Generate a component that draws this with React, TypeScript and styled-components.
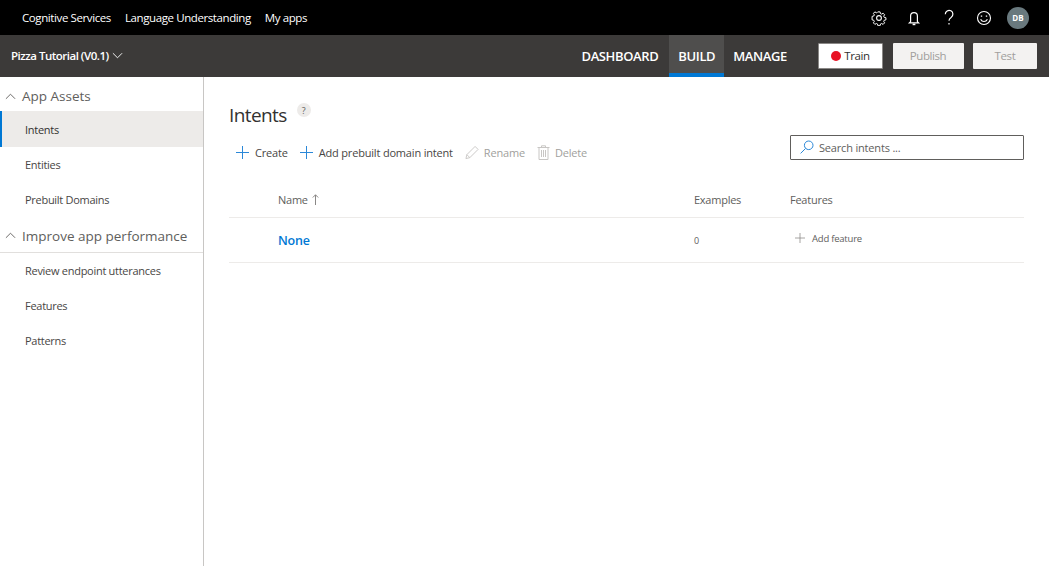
import React from 'react';
import styled, { createGlobalStyle } from 'styled-components';

const GlobalStyle = createGlobalStyle`
  html, body {
    margin: 0;
    padding: 0;
    height: 100%;
    background: #fff;
    font-family: "Open Sans", "Noto Sans", "Liberation Sans", sans-serif;
    overflow: hidden;
  }
`;

const Page = styled.div`
  display: flex;
  flex-direction: column;
  width: 1049px;
  height: 566px;
`;

const TopBar = styled.header`
  display: flex;
  align-items: center;
  justify-content: space-between;
  height: 35px;
  background: #000;
  padding: 0 20px 0 22px;
`;

const TopLinks = styled.nav`
  display: flex;
  gap: 14px;
`;

const TopLink = styled.a`
  color: #fff;
  font-size: 11.5px;
  letter-spacing: -0.4px;
`;

const TopIcons = styled.div`
  display: flex;
  align-items: center;
  gap: 15px;
`;

const TopIcon = styled.span`
  display: flex;
  align-items: center;
  justify-content: center;
  width: 20px;
  height: 20px;
  color: #fff;
  svg {
    display: block;
  }
`;

const Avatar = styled.span`
  display: flex;
  align-items: center;
  justify-content: center;
  width: 22px;
  height: 22px;
  margin-left: -2px;
  border-radius: 50%;
  background: #69797e;
  color: #fff;
  font-size: 8px;
  font-weight: 700;
`;

const AppBar = styled.div`
  display: flex;
  align-items: stretch;
  justify-content: space-between;
  height: 42px;
  background: #3c3a39;
  padding: 0 12px 0 11px;
`;

const AppName = styled.div`
  display: flex;
  align-items: center;
  gap: 3px;
  padding-bottom: 1px;
  color: #fff;
  font-size: 11.5px;
  font-weight: 600;
  letter-spacing: -0.5px;
`;

const AppNav = styled.div`
  display: flex;
  align-items: stretch;
`;

const NavTab = styled.a<{ $active?: boolean; $wide?: boolean }>`
  display: flex;
  align-items: center;
  padding: ${(p) => (p.$active ? '4px 9px 0' : `0 ${p.$wide ? '11px' : '10px'} 0 9px`)};
  color: #fff;
  font-size: 13px;
  font-weight: 600;
  letter-spacing: -0.38px;
  background: ${(p) => (p.$active ? '#4f4e4d' : 'transparent')};
  border-bottom: ${(p) => (p.$active ? '4px solid #0078d4' : 'none')};
`;

const Actions = styled.div`
  display: flex;
  align-items: center;
  gap: 9.5px;
  margin-left: 21px;
`;

const TrainButton = styled.button`
  display: flex;
  align-items: center;
  justify-content: center;
  gap: 3px;
  width: 65px;
  height: 26px;
  padding: 0 0 1px;
  background: #fff;
  border: 1px solid #8a8886;
  border-radius: 1px;
  color: #323130;
  font: inherit;
  font-size: 11.5px;
  letter-spacing: -0.4px;
`;

const RedDot = styled.span`
  width: 10px;
  height: 10px;
  border-radius: 50%;
  background: #e81123;
`;

const DisabledButton = styled.button<{ $width: number }>`
  width: ${(p) => p.$width}px;
  height: 26px;
  padding: 0 0 1px;
  background: #f3f2f1;
  border: none;
  border-radius: 1px;
  color: #a19f9d;
  font: inherit;
  font-size: 11.5px;
  font-weight: 400;
  letter-spacing: -0.4px;
`;

const Body = styled.div`
  display: flex;
  flex: 1;
  min-height: 0;
`;

const Sidebar = styled.aside`
  width: 203px;
  flex-shrink: 0;
  border-right: 1px solid #c8c6c4;
  padding-top: 6px;
`;

const SectionHead = styled.div<{ $ruled?: boolean }>`
  display: flex;
  align-items: center;
  gap: 6px;
  box-sizing: border-box;
  height: ${(p) => (p.$ruled ? '36px' : '26px')};
  margin-bottom: ${(p) => (p.$ruled ? '0' : '2px')};
  padding: ${(p) => (p.$ruled ? '2px 0 0 5px' : '0 0 0 5px')};
  color: #605e5c;
  font-size: 13.5px;
  border-bottom: ${(p) => (p.$ruled ? '1px solid #e1dfdd' : 'none')};
`;

const NavItem = styled.a<{ $active?: boolean }>`
  display: flex;
  align-items: center;
  height: ${(p) => (p.$active ? '36px' : '35px')};
  padding-left: ${(p) => (p.$active ? '23px' : '25px')};
  font-size: 11px;
  letter-spacing: -0.28px;
  color: ${(p) => (p.$active ? '#323130' : '#484644')};
  background: ${(p) => (p.$active ? '#edebe9' : 'transparent')};
  border-left: ${(p) => (p.$active ? '2px solid #0078d4' : 'none')};
`;

const Main = styled.main`
  flex: 1;
  padding: 24px 25px 0;
  min-width: 0;
`;

const TitleRow = styled.div`
  display: flex;
  align-items: flex-start;
  gap: 10px;
  height: 28px;
`;

const Title = styled.h1`
  margin: 0;
  font-size: 19px;
  font-weight: 400;
  line-height: 28px;
  letter-spacing: -0.6px;
  color: #323130;
`;

const HelpBadge = styled.span`
  display: flex;
  align-items: center;
  justify-content: center;
  width: 14px;
  height: 14px;
  margin-top: 2px;
  border-radius: 50%;
  background: #edebe9;
  color: #605e5c;
  font-size: 9px;
`;

const ToolRow = styled.div`
  display: flex;
  align-items: center;
  justify-content: space-between;
  height: 36px;
  margin-top: 5px;
`;

const Tools = styled.div`
  display: flex;
  align-items: center;
  gap: 12px;
  padding-left: 7px;
`;

const Tool = styled.a<{ $disabled?: boolean }>`
  display: flex;
  align-items: center;
  gap: ${(p) => (p.$disabled ? '5px' : '6px')};
  font-size: 11px;
  letter-spacing: -0.18px;
  color: ${(p) => (p.$disabled ? '#a19f9d' : '#484644')};
`;

const SearchBox = styled.div`
  display: flex;
  align-items: center;
  gap: 5px;
  box-sizing: border-box;
  width: 234px;
  height: 25px;
  margin-top: -10px;
  padding-left: 9px;
  border: 1px solid #605e5c;
  border-radius: 1px;
  color: #605e5c;
  font-size: 11px;
  letter-spacing: -0.18px;
`;

const TableRow = styled.div<{ $height: number; $head?: boolean }>`
  display: grid;
  grid-template-columns: 465px 96px 1fr;
  align-items: center;
  box-sizing: border-box;
  height: ${(p) => p.$height}px;
  padding-top: ${(p) => (p.$head ? '12px' : '0')};
  border-bottom: 1px solid #edebe9;
`;

const HeadCell = styled.div<{ $first?: boolean }>`
  display: flex;
  align-items: center;
  gap: 4px;
  padding-left: ${(p) => (p.$first ? '49px' : '0')};
  color: #605e5c;
  font-size: 11px;
  letter-spacing: -0.25px;
`;

const NameLink = styled.a`
  padding-left: 49px;
  color: #0078d4;
  font-size: 12.5px;
  font-weight: 600;
  letter-spacing: -0.2px;
`;

const CountCell = styled.div`
  color: #605e5c;
  font-size: 9px;
`;

const AddFeature = styled.a`
  display: flex;
  align-items: center;
  gap: 7px;
  margin-top: -4px;
  padding-left: 5px;
  color: #605e5c;
  font-size: 9.5px;
  letter-spacing: -0.22px;
`;

const Chevron = ({ up, size = 11 }: { up?: boolean; size?: number }) => (
  <svg width={size} height={size} viewBox="0 0 12 12" fill="none" stroke="currentColor" strokeWidth="1">
    <path d={up ? 'M1 8.5 6 3.5l5 5' : 'M1 3.5l5 5 5-5'} />
  </svg>
);

const Plus = ({ color, size = 13 }: { color: string; size?: number }) => (
  <svg width={size} height={size} viewBox="0 0 13 13" fill="none" stroke={color} strokeWidth="1">
    <path d="M6.5 0v13M0 6.5h13" />
  </svg>
);

const Gear = () => (
  <svg width="16" height="16" viewBox="0 0 16 16" fill="none" stroke="currentColor" strokeWidth="1.1">
    <circle cx="8" cy="8" r="2.4" />
    <path d="M6.8 1.2h2.4l.4 1.9 1.3.6 1.7-1 1.6 1.7-1 1.6.6 1.3 1.9.4v2.4l-1.9.4-.6 1.3 1 1.6-1.6 1.7-1.7-1-1.3.6-.4 1.9H6.8l-.4-1.9-1.3-.6-1.7 1-1.6-1.7 1-1.6-.6-1.3-1.9-.4V6.2l1.9-.4.6-1.3-1-1.6 1.6-1.7 1.7 1 1.3-.6z" transform="translate(.8 .8) scale(.9)" />
  </svg>
);

const Bell = () => (
  <svg width="16" height="16" viewBox="0 0 16 16" fill="none" stroke="currentColor" strokeWidth="1.2">
    <path d="M4.6 11.6V6a3.4 3.4 0 0 1 6.8 0v5.6l1.2 1.2H3.4z" />
    <path d="M6.6 14.4h2.8" strokeWidth="1.6" />
  </svg>
);

const Question = () => (
  <svg width="16" height="18" viewBox="0 0 16 18" fill="none" stroke="currentColor" strokeWidth="1.2">
    <path d="M4.3 5.2a3.8 3.8 0 1 1 5.8 3.2C8.6 9.4 8 10 8 11.8" />
    <path d="M8 14v1.4" />
  </svg>
);

const Smile = () => (
  <svg width="16" height="16" viewBox="0 0 16 16" fill="none" stroke="currentColor" strokeWidth="1.1">
    <circle cx="8" cy="8" r="6.5" />
    <path d="M4.6 9.2c.8 1.6 2 2.3 3.4 2.3s2.6-.7 3.4-2.3" />
    <path d="M5.5 5.4v1.4M10.5 5.4v1.4" strokeWidth="1.4" />
  </svg>
);

const Pencil = () => (
  <svg width="14" height="15" viewBox="0 0 15 15" fill="none" stroke="#c8c6c4" strokeWidth="1">
    <path d="M1 14l1-4.2L10.8 1l3.2 3.2L5.2 13z" />
    <path d="M2 9.8 5.2 13" />
  </svg>
);

const Trash = () => (
  <svg width="13" height="15" viewBox="0 0 13 15" fill="none" stroke="#c8c6c4" strokeWidth="1">
    <path d="M.5 2.5h12M4.5 2.5V.8h4v1.7M2 2.5v12h9v-12" />
    <path d="M4.5 5v7M6.5 5v7M8.5 5v7" />
  </svg>
);

const SearchGlyph = () => (
  <svg width="14" height="14" viewBox="0 0 14 14" fill="none" stroke="#2b88d8" strokeWidth="1">
    <circle cx="8.7" cy="5.3" r="4.3" />
    <path d="M5.6 8.4.6 13.4" />
  </svg>
);

const SortUp = () => (
  <svg width="7" height="11" viewBox="0 0 7 11" fill="none" stroke="#8a8886" strokeWidth="1">
    <path d="M3.5 11V.8M.8 3.5 3.5.8l2.7 2.7" />
  </svg>
);

const assetItems = ['Intents', 'Entities', 'Prebuilt Domains'];
const improveItems = ['Review endpoint utterances', 'Features', 'Patterns'];

export default function App() {
  return (
    <Page>
      <GlobalStyle />
      <TopBar>
        <TopLinks>
          <TopLink>Cognitive Services</TopLink>
          <TopLink>Language Understanding</TopLink>
          <TopLink>My apps</TopLink>
        </TopLinks>
        <TopIcons>
          <TopIcon><Gear /></TopIcon>
          <TopIcon><Bell /></TopIcon>
          <TopIcon><Question /></TopIcon>
          <TopIcon><Smile /></TopIcon>
          <Avatar>DB</Avatar>
        </TopIcons>
      </TopBar>
      <AppBar>
        <AppName>
          Pizza Tutorial (V0.1) <Chevron />
        </AppName>
        <AppNav>
          <NavTab $wide>DASHBOARD</NavTab>
          <NavTab $active>BUILD</NavTab>
          <NavTab>MANAGE</NavTab>
          <Actions>
            <TrainButton>
              <RedDot />
              Train
            </TrainButton>
            <DisabledButton $width={71}>Publish</DisabledButton>
            <DisabledButton $width={64}>Test</DisabledButton>
          </Actions>
        </AppNav>
      </AppBar>
      <Body>
        <Sidebar>
          <SectionHead>
            <Chevron up />
            App Assets
          </SectionHead>
          {assetItems.map((item, index) => (
            <NavItem key={item} $active={index === 0}>{item}</NavItem>
          ))}
          <SectionHead $ruled>
            <Chevron up />
            Improve app performance
          </SectionHead>
          {improveItems.map((item) => (
            <NavItem key={item}>{item}</NavItem>
          ))}
        </Sidebar>
        <Main>
          <TitleRow>
            <Title>Intents</Title>
            <HelpBadge>?</HelpBadge>
          </TitleRow>
          <ToolRow>
            <Tools>
              <Tool><Plus color="#2b88d8" />Create</Tool>
              <Tool><Plus color="#2b88d8" />Add prebuilt domain intent</Tool>
              <Tool $disabled><Pencil />Rename</Tool>
              <Tool $disabled><Trash />Delete</Tool>
            </Tools>
            <SearchBox>
              <SearchGlyph />
              Search intents ...
            </SearchBox>
          </ToolRow>
          <TableRow $height={48} $head>
            <HeadCell $first>Name <SortUp /></HeadCell>
            <HeadCell>Examples</HeadCell>
            <HeadCell>Features</HeadCell>
          </TableRow>
          <TableRow $height={45}>
            <NameLink>None</NameLink>
            <CountCell>0</CountCell>
            <AddFeature><Plus color="#8a8886" size={10} />Add feature</AddFeature>
          </TableRow>
        </Main>
      </Body>
    </Page>
  );
}
